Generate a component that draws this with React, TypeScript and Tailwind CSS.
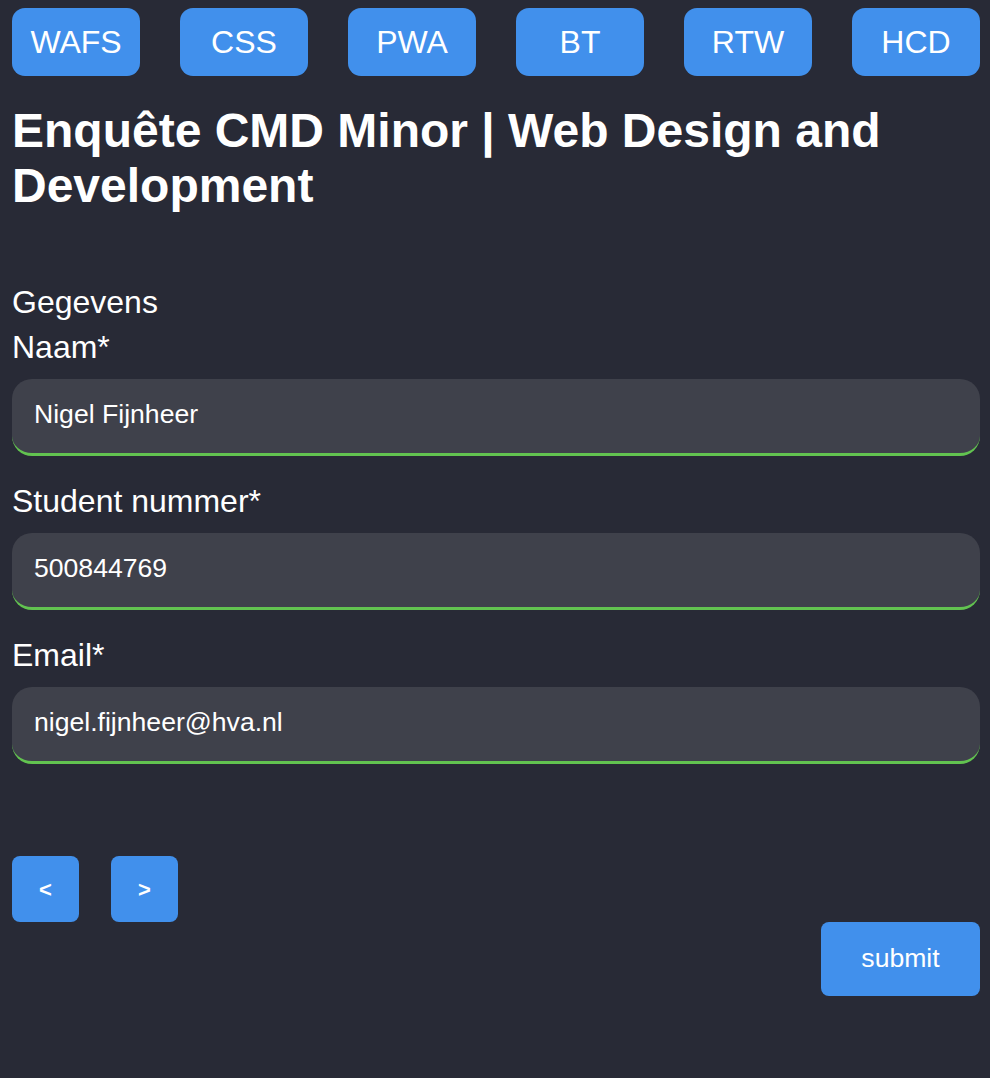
import React from "react";

const tabs = ["WAFS", "CSS", "PWA", "BT", "RTW", "HCD"];

const fields = [
  { label: "Naam*", value: "Nigel Fijnheer" },
  { label: "Student nummer*", value: "500844769" },
  { label: "Email*", value: "nigel.fijnheer@hva.nl" },
];

export default function App() {
  return (
    <div
      className="min-h-[1078px] bg-[#282a36] pl-3 pr-[10px] pt-2 text-white"
      style={{ fontFamily: '"Liberation Sans", Arial, sans-serif' }}
    >
      <nav className="flex justify-between">
        {tabs.map((t) => (
          <a
            key={t}
            className="flex h-[68px] w-[128px] items-center justify-center rounded-[13px] bg-[#4190ec] text-[32px]"
          >
            {t}
          </a>
        ))}
      </nav>

      <h1 className="mt-[27px] text-[48px] font-bold leading-[55px]">
        Enquête CMD Minor | Web Design and Development
      </h1>

      <form className="mt-[71px]">
        <p className="mb-[9px] text-[32px] leading-[36px]">Gegevens</p>
        {fields.map((f, i) => (
          <div key={f.label} className={i > 0 ? "mt-[27px]" : ""}>
            <label className="block text-[32px] leading-[36px]">{f.label}</label>
            <input
              readOnly
              value={f.value}
              className="mt-[14px] block h-[77px] w-full rounded-[20px] border-b-[3px] border-[#62c350] bg-[#3f414b] px-[22px] pb-1 text-[26.6px] text-white outline-none"
            />
          </div>
        ))}

        <div className="mt-[92px] flex gap-8">
          <button
            type="button"
            className="flex h-[66px] w-[67px] items-center justify-center rounded-lg bg-[#4190ec] text-[22px] font-bold"
          >
            &lt;
          </button>
          <button
            type="button"
            className="flex h-[66px] w-[67px] items-center justify-center rounded-lg bg-[#4190ec] text-[22px] font-bold"
          >
            &gt;
          </button>
        </div>
        <div className="flex justify-end">
          <button
            type="submit"
            className="h-[74px] w-[159px] rounded-lg bg-[#4190ec] text-[26.6px]"
          >
            submit
          </button>
        </div>
      </form>
    </div>
  );
}
